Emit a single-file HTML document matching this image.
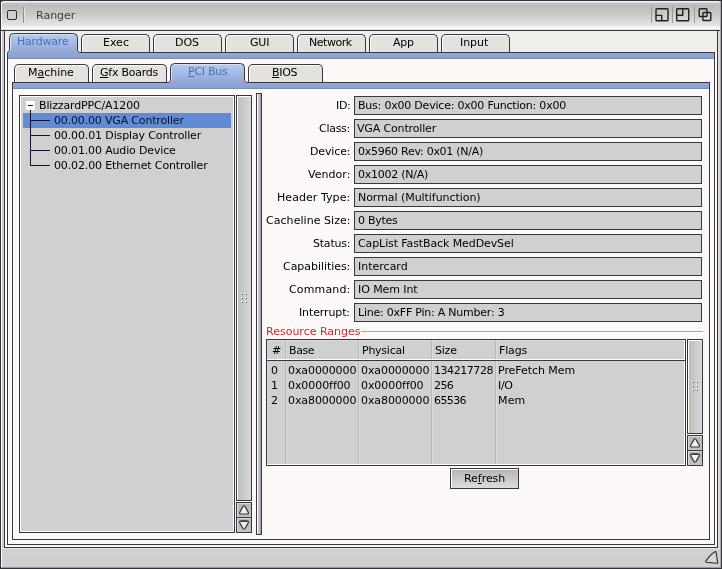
<!DOCTYPE html>
<html>
<head>
<meta charset="utf-8">
<title>Ranger</title>
<style>
html,body{margin:0;padding:0;}
body{width:722px;height:569px;overflow:hidden;background:#cfcfcf;position:relative;
 font-family:"DejaVu Sans","Liberation Sans",sans-serif;font-size:11px;color:#000;line-height:13px;}
body>*{will-change:transform;}
div,span{position:absolute;box-sizing:border-box;white-space:nowrap;}
.t{}
u{text-decoration:underline;text-underline-offset:1px;}
.dk{background:#3a3640;}
#frame{left:0;top:0;width:722px;height:569px;border:1px solid #34323a;background:#34323a;}
#title{left:1px;top:1px;width:720px;height:29px;border-radius:2.5px 2.5px 0 0;
 background:linear-gradient(to bottom,#f2f2f2 0,#f2f2f2 1px,#c6c6c6 2px,#bcbcbc 4px,#c8c8c8 12px,#e4e4e4 24px,#f4f4f4 26px,#ffffff 27px,#ffffff 28px,#c8c8c8 29px);}
#tline{left:0;top:30px;width:722px;height:1px;}
#content{left:5px;top:31px;width:712px;height:516px;background:#fefbfb;}
#ctop{left:5px;top:31px;width:712px;height:21px;background:#efeeea;}
#lb1{left:1px;top:31px;width:1px;height:536px;background:#fff;}
#lb2{left:2px;top:31px;width:2px;height:536px;background:#cbcbcb;}
#lb3{left:4px;top:31px;width:1px;height:517px;}
#rb1{left:717px;top:31px;width:1px;height:517px;}
#rb2{left:718px;top:31px;width:2px;height:536px;background:#dcdcdc;}
#rb3{left:720px;top:1px;width:1px;height:567px;background:#a8a8a8;}
#bb1{left:4px;top:547px;width:714px;height:1px;}
#bbar{left:2px;top:548px;width:718px;height:19px;background:linear-gradient(to bottom,#e6e6e6 0,#e6e6e6 1px,#d2d2d2 1px,#cecece 100%);}
#bb2{left:1px;top:567px;width:720px;height:1px;background:#9a9a9a;}
.page{border:1px solid #3a3640;background:#fdf9f9;}
.page:before{content:"";position:absolute;left:0;top:0;right:0;bottom:0;border-left:1px solid #fff;}
#page1{left:7px;top:52px;width:708px;height:493px;}
#page2{left:12px;top:82px;width:698px;height:458px;}
.band{left:0;top:0;width:100%;height:6px;background:linear-gradient(to bottom,#93a9d6,#8aa0cf);border-bottom:1px solid #768cbc;}
.bandw{left:0;top:6px;width:100%;height:1px;background:#fff;}
.tab{border:1px solid #3a3640;border-bottom:0;border-radius:5px 5px 0 0;background:#e4e2de;box-shadow:inset 1px 1px 0 #fff;}
.lbox{border:1px solid #3a3640;background:#d0d0d0;}
.sbar{border:1px solid #3a3640;background:linear-gradient(to right,#bcbcbc,#d8d8d8);box-shadow:inset 1px 1px 0 #fff;}
.sbtn{border:1px solid #3a3640;background:linear-gradient(to bottom,#b6b6b6,#c4c4c4);box-shadow:inset 1px 1px 0 #dcdcdc;}
.fld{left:354px;width:348px;height:19px;border:1px solid #3a3640;background:#d0d0d0;}
</style>
</head>
<body>
<div id="frame"></div><div id="title"></div><div id="tline" class="dk"></div><div id="content"></div><div id="ctop"></div>
<div id="lb1"></div><div id="lb2"></div><div id="lb3" class="dk"></div>
<div id="rb1" class="dk"></div><div id="rb2"></div><div id="rb3"></div>
<div id="bb1" class="dk"></div><div id="bbar"></div><div id="bb2"></div>
<div style="left:7px;top:10px;width:10px;height:10px;border:1px solid #2c2c2c;border-radius:2px;background:#d0d0d0;"></div>
<div style="left:23px;top:7px;width:1px;height:16px;background:#909090;"></div><div style="left:24px;top:7px;width:1px;height:16px;background:#e4e4e4;"></div>
<div style="left:1px;top:2px;width:1px;height:28px;background:#f4f4f4;"></div>
<div class="t" style="left:36.1px;top:9px;color:#3c3c3c;">Ranger</div>
<svg style="position:absolute;left:650px;top:4px" width="70" height="24" viewBox="0 0 70 24">
 <g fill="none" stroke="#222222" stroke-width="1.4">
  <line x1="1.5" y1="2" x2="1.5" y2="19" stroke="#9a9a9a" stroke-width="1"/>
  <line x1="22.5" y1="2" x2="22.5" y2="19" stroke="#9a9a9a" stroke-width="1"/>
  <line x1="44.5" y1="2" x2="44.5" y2="19" stroke="#9a9a9a" stroke-width="1"/>
  <rect x="6" y="4.7" width="12" height="12" rx="0.8"/>
  <path d="M6 11.4 h5.7 v5.3"/>
  <rect x="26.7" y="4.7" width="12" height="12" rx="0.8"/>
  <path d="M26.7 11.3 h6 v-6.6"/>
  <rect x="49.2" y="4.7" width="7.8" height="7.8" rx="0.8"/>
  <rect x="52.9" y="8.5" width="7.9" height="8" rx="0.8"/>
 </g>
</svg>
<svg style="position:absolute;left:703px;top:549px" width="17" height="17" viewBox="0 0 17 17">
 <path d="M3 11.9 Q6.5 6 11.8 2.7 Q12.9 2 13.1 3.3 L14.7 13.3 Q14.8 14.3 13.8 14.2 L3.4 13.2 Q2.2 12.9 3 11.9 Z" fill="#d6d6d6" stroke="#2c2c2c" stroke-width="1.1" stroke-linejoin="round"/>
</svg>
<div id="page1" class="page"><div class="band"></div><div class="bandw"></div></div>
<svg style="position:absolute;left:6px;top:33px" width="75" height="21" viewBox="0 0 75 21"><defs><linearGradient id="g9_33" x1="0" y1="0" x2="0" y2="1"><stop offset="0" stop-color="#b6cdf0"/><stop offset="1" stop-color="#8ea4d2"/></linearGradient></defs><path d="M 1.5 19.5 L 3.5 17.5 L 3.5 4.5 Q 3.5 0.5 7.5 0.5 L 67.5 0.5 Q 71.5 0.5 71.5 4.5 L 71.5 17.5 L 73.5 19.5 L 73.5 21 L 1.5 21 Z" fill="url(#g9_33)"/><path d="M 4.5 17.5 L 4.5 4.8 Q 4.5 1.5 7.8 1.5 L 67.5 1.5" fill="none" stroke="#d4e2f8" stroke-width="1"/><path d="M 1.5 19.5 L 3.5 17.5 L 3.5 4.5 Q 3.5 0.5 7.5 0.5 L 67.5 0.5 Q 71.5 0.5 71.5 4.5 L 71.5 17.5 L 73.5 19.5" fill="none" stroke="#3a3640" stroke-width="1"/></svg>
<div class="t" style="left:17.0px;top:35px;letter-spacing:-0.20px;color:#4a70b8;">Hardware</div>
<div class="tab" style="left:81px;top:34px;width:69px;height:18px;"></div>
<div class="t" style="left:102.5px;top:36px;">Exec</div>
<div class="tab" style="left:153px;top:34px;width:69px;height:18px;"></div>
<div class="t" style="left:174.6px;top:36px;letter-spacing:-0.05px;">DOS</div>
<div class="tab" style="left:225px;top:34px;width:69px;height:18px;"></div>
<div class="t" style="left:249.9px;top:36px;letter-spacing:-0.15px;">GUI</div>
<div class="tab" style="left:297px;top:34px;width:69px;height:18px;"></div>
<div class="t" style="left:309.1px;top:36px;letter-spacing:-0.46px;">Network</div>
<div class="tab" style="left:369px;top:34px;width:69px;height:18px;"></div>
<div class="t" style="left:392.9px;top:36px;letter-spacing:-0.20px;">App</div>
<div class="tab" style="left:441px;top:34px;width:69px;height:18px;"></div>
<div class="t" style="left:460.4px;top:36px;letter-spacing:-0.06px;">Input</div>
<div id="page2" class="page"><div class="band"></div><div class="bandw"></div></div>
<div class="tab" style="left:14px;top:64px;width:75px;height:18px;"></div>
<div class="t" style="left:27.6px;top:66px;letter-spacing:-0.03px;">M<u>a</u>chine</div>
<div class="tab" style="left:92px;top:64px;width:75px;height:18px;"></div>
<div class="t" style="left:100.2px;top:66px;letter-spacing:-0.25px;"><u>G</u>fx Boards</div>
<svg style="position:absolute;left:167px;top:63px" width="81" height="21" viewBox="0 0 81 21"><defs><linearGradient id="g170_63" x1="0" y1="0" x2="0" y2="1"><stop offset="0" stop-color="#b6cdf0"/><stop offset="1" stop-color="#8ea4d2"/></linearGradient></defs><path d="M 1.5 19.5 L 3.5 17.5 L 3.5 4.5 Q 3.5 0.5 7.5 0.5 L 73.5 0.5 Q 77.5 0.5 77.5 4.5 L 77.5 17.5 L 79.5 19.5 L 79.5 21 L 1.5 21 Z" fill="url(#g170_63)"/><path d="M 4.5 17.5 L 4.5 4.8 Q 4.5 1.5 7.8 1.5 L 73.5 1.5" fill="none" stroke="#d4e2f8" stroke-width="1"/><path d="M 1.5 19.5 L 3.5 17.5 L 3.5 4.5 Q 3.5 0.5 7.5 0.5 L 73.5 0.5 Q 77.5 0.5 77.5 4.5 L 77.5 17.5 L 79.5 19.5" fill="none" stroke="#3a3640" stroke-width="1"/></svg>
<div class="t" style="left:187.6px;top:65px;letter-spacing:-0.26px;color:#4a70b8;"><u>P</u>CI Bus</div>
<div class="tab" style="left:248px;top:64px;width:75px;height:18px;"></div>
<div class="t" style="left:272.1px;top:66px;letter-spacing:-0.32px;"><u>B</u>IOS</div>
<div class="lbox" style="left:19px;top:95px;width:216px;height:438px;box-shadow:inset 0 0 0 1px #fff;"></div>
<div style="left:23px;top:113px;width:208px;height:15px;background:#618bd4;"></div>
<div style="left:26px;top:101px;width:9px;height:9px;background:#fff;"></div>
<div style="left:28px;top:105px;width:5px;height:1px;background:#222;"></div>
<div style="left:30px;top:110px;width:1px;height:56px;background:#101030;"></div>
<div style="left:30px;top:120px;width:20px;height:1px;background:#101030;"></div>
<div style="left:30px;top:135px;width:20px;height:1px;background:#101030;"></div>
<div style="left:30px;top:150px;width:20px;height:1px;background:#101030;"></div>
<div style="left:30px;top:165px;width:20px;height:1px;background:#101030;"></div>
<div class="t" style="left:39.1px;top:99px;letter-spacing:-0.15px;">BlizzardPPC/A1200</div>
<div class="t" style="left:54.4px;top:114px;letter-spacing:-0.17px;color:#0a1030;">00.00.00 VGA Controller</div>
<div class="t" style="left:54.4px;top:129px;letter-spacing:-0.13px;">00.00.01 Display Controller</div>
<div class="t" style="left:54.4px;top:144px;letter-spacing:-0.15px;">00.01.00 Audio Device</div>
<div class="t" style="left:54.4px;top:159px;letter-spacing:-0.14px;">00.02.00 Ethernet Controller</div>
<div class="sbar" style="left:236px;top:95px;width:16px;height:406px;"></div>
<div class="sbtn" style="left:236px;top:502px;width:16px;height:16px;"></div>
<div class="sbtn" style="left:236px;top:517px;width:16px;height:16px;"></div>
<svg style="position:absolute;left:236px;top:502px" width="16" height="31" viewBox="0 0 16 31"><g fill="#f0f0f0" stroke="#383838" stroke-width="1.15" stroke-linejoin="round"><path d="M6.9 4.6 Q8 2.9 9.1 4.6 L12.3 10.4 Q12.9 12 11.3 12 L4.7 12 Q3.1 12 3.7 10.4 Z"/><path d="M6.9 26.4 Q8 28.1 9.1 26.4 L12.3 20.6 Q12.9 19 11.3 19 L4.7 19 Q3.1 19 3.7 20.6 Z"/><path d="M4.6 19.2 L11.4 19.2" stroke-width="1.5"/></g></svg>
<div style="left:256px;top:93px;width:6px;height:442px;border:1px solid #3a3640;background:linear-gradient(to right,#fff 0,#fff 1px,#d0d0d6 1px,#a0a0a8 100%);"></div>
<svg style="position:absolute;left:241px;top:293px" width="6" height="10" viewBox="0 0 6 10" shape-rendering="crispEdges"><rect x="0" y="0" width="1" height="1" fill="#fff"/><rect x="1" y="1" width="1" height="1" fill="#585858"/><rect x="0" y="4" width="1" height="1" fill="#fff"/><rect x="1" y="5" width="1" height="1" fill="#585858"/><rect x="0" y="8" width="1" height="1" fill="#fff"/><rect x="1" y="9" width="1" height="1" fill="#585858"/><rect x="4" y="0" width="1" height="1" fill="#fff"/><rect x="5" y="1" width="1" height="1" fill="#585858"/><rect x="4" y="4" width="1" height="1" fill="#fff"/><rect x="5" y="5" width="1" height="1" fill="#585858"/><rect x="4" y="8" width="1" height="1" fill="#fff"/><rect x="5" y="9" width="1" height="1" fill="#585858"/></svg>
<div class="fld" style="top:96px;"></div>
<div class="t" style="left:335.6px;top:99px;letter-spacing:-0.30px;">ID:</div>
<div class="t" style="left:357.7px;top:99px;letter-spacing:-0.21px;">Bus: 0x00 Device: 0x00 Function: 0x00</div>
<div class="fld" style="top:119px;"></div>
<div class="t" style="left:319.1px;top:122px;letter-spacing:-0.28px;">Class:</div>
<div class="t" style="left:357.4px;top:122px;letter-spacing:-0.15px;">VGA Controller</div>
<div class="fld" style="top:142px;"></div>
<div class="t" style="left:309.8px;top:145px;letter-spacing:-0.13px;">Device:</div>
<div class="t" style="left:357.8px;top:145px;letter-spacing:-0.28px;">0x5960 Rev: 0x01 (N/A)</div>
<div class="fld" style="top:165px;"></div>
<div class="t" style="left:308.1px;top:168px;letter-spacing:0.03px;">Vendor:</div>
<div class="t" style="left:357.8px;top:168px;letter-spacing:-0.24px;">0x1002 (N/A)</div>
<div class="fld" style="top:188px;"></div>
<div class="t" style="left:277.1px;top:191px;letter-spacing:0.06px;">Header Type:</div>
<div class="t" style="left:357.5px;top:191px;letter-spacing:-0.05px;">Normal (Multifunction)</div>
<div class="fld" style="top:211px;"></div>
<div class="t" style="left:265.8px;top:214px;letter-spacing:0.05px;">Cacheline Size:</div>
<div class="t" style="left:357.8px;top:214px;letter-spacing:-0.28px;">0 Bytes</div>
<div class="fld" style="top:234px;"></div>
<div class="t" style="left:312.8px;top:237px;letter-spacing:-0.22px;">Status:</div>
<div class="t" style="left:357.8px;top:237px;letter-spacing:-0.10px;">CapList FastBack MedDevSel</div>
<div class="fld" style="top:257px;"></div>
<div class="t" style="left:283.1px;top:260px;letter-spacing:-0.05px;">Capabilities:</div>
<div class="t" style="left:357.5px;top:260px;">Intercard</div>
<div class="fld" style="top:280px;"></div>
<div class="t" style="left:288.9px;top:283px;letter-spacing:0.15px;">Command:</div>
<div class="t" style="left:357.5px;top:283px;letter-spacing:-0.08px;">IO Mem Int</div>
<div class="fld" style="top:303px;"></div>
<div class="t" style="left:299.3px;top:306px;letter-spacing:-0.12px;">Interrupt:</div>
<div class="t" style="left:357.5px;top:306px;letter-spacing:-0.23px;">Line: 0xFF Pin: A Number: 3</div>
<div class="t" style="left:265.8px;top:325px;color:#d02828;">Resource Ranges</div>
<div style="left:361px;top:331px;width:342px;height:1px;background:#aca4a4;"></div>
<div style="left:361px;top:332px;width:342px;height:1px;background:#fff;"></div>
<div class="lbox" style="left:266px;top:339px;width:420px;height:127px;box-shadow:inset -1px -1px 0 #fff, inset 1px 1px 0 #dadada;"></div>
<div style="left:285px;top:340px;width:1px;height:124px;background:#b8b8b8;"></div><div style="left:286px;top:340px;width:1px;height:124px;background:#dcdcdc;"></div>
<div style="left:358px;top:340px;width:1px;height:124px;background:#b8b8b8;"></div><div style="left:359px;top:340px;width:1px;height:124px;background:#dcdcdc;"></div>
<div style="left:431px;top:340px;width:1px;height:124px;background:#b8b8b8;"></div><div style="left:432px;top:340px;width:1px;height:124px;background:#dcdcdc;"></div>
<div style="left:495px;top:340px;width:1px;height:124px;background:#b8b8b8;"></div><div style="left:496px;top:340px;width:1px;height:124px;background:#dcdcdc;"></div>
<div style="left:267px;top:359px;width:418px;height:1px;background:#fff;"></div>
<div style="left:266px;top:360px;width:420px;height:1px;background:#3a3640;"></div>
<div class="t" style="left:272.4px;top:344px;letter-spacing:-0.60px;">#</div>
<div class="t" style="left:288.8px;top:344px;letter-spacing:-0.42px;">Base</div>
<div class="t" style="left:361.9px;top:344px;letter-spacing:-0.25px;">Physical</div>
<div class="t" style="left:435.3px;top:344px;letter-spacing:-0.22px;">Size</div>
<div class="t" style="left:498.8px;top:344px;letter-spacing:-0.14px;">Flags</div>
<div class="t" style="left:271.2px;top:364px;">0</div>
<div class="t" style="left:288.1px;top:364px;letter-spacing:-0.09px;">0xa0000000</div>
<div class="t" style="left:361.1px;top:364px;letter-spacing:-0.09px;">0xa0000000</div>
<div class="t" style="left:433.8px;top:364px;letter-spacing:-0.44px;">134217728</div>
<div class="t" style="left:497.8px;top:364px;letter-spacing:-0.05px;">PreFetch Mem</div>
<div class="t" style="left:270.8px;top:379px;">1</div>
<div class="t" style="left:288.1px;top:379px;letter-spacing:-0.07px;">0x0000ff00</div>
<div class="t" style="left:361.1px;top:379px;letter-spacing:-0.07px;">0x0000ff00</div>
<div class="t" style="left:434.3px;top:379px;letter-spacing:-0.60px;">256</div>
<div class="t" style="left:497.8px;top:379px;letter-spacing:-0.30px;">I/O</div>
<div class="t" style="left:271.2px;top:394px;">2</div>
<div class="t" style="left:288.1px;top:394px;letter-spacing:-0.09px;">0xa8000000</div>
<div class="t" style="left:361.1px;top:394px;letter-spacing:-0.09px;">0xa8000000</div>
<div class="t" style="left:434.3px;top:394px;letter-spacing:-0.60px;">65536</div>
<div class="t" style="left:497.8px;top:394px;letter-spacing:0.15px;">Mem</div>
<div class="sbar" style="left:687px;top:339px;width:16px;height:95px;"></div>
<div class="sbtn" style="left:687px;top:435px;width:16px;height:16px;"></div>
<div class="sbtn" style="left:687px;top:450px;width:16px;height:16px;"></div>
<svg style="position:absolute;left:687px;top:435px" width="16" height="31" viewBox="0 0 16 31"><g fill="#f0f0f0" stroke="#383838" stroke-width="1.15" stroke-linejoin="round"><path d="M6.9 4.6 Q8 2.9 9.1 4.6 L12.3 10.4 Q12.9 12 11.3 12 L4.7 12 Q3.1 12 3.7 10.4 Z"/><path d="M6.9 26.4 Q8 28.1 9.1 26.4 L12.3 20.6 Q12.9 19 11.3 19 L4.7 19 Q3.1 19 3.7 20.6 Z"/><path d="M4.6 19.2 L11.4 19.2" stroke-width="1.5"/></g></svg>
<svg style="position:absolute;left:692px;top:381px" width="6" height="10" viewBox="0 0 6 10" shape-rendering="crispEdges"><rect x="0" y="0" width="1" height="1" fill="#fff"/><rect x="1" y="1" width="1" height="1" fill="#585858"/><rect x="0" y="4" width="1" height="1" fill="#fff"/><rect x="1" y="5" width="1" height="1" fill="#585858"/><rect x="0" y="8" width="1" height="1" fill="#fff"/><rect x="1" y="9" width="1" height="1" fill="#585858"/><rect x="4" y="0" width="1" height="1" fill="#fff"/><rect x="5" y="1" width="1" height="1" fill="#585858"/><rect x="4" y="4" width="1" height="1" fill="#fff"/><rect x="5" y="5" width="1" height="1" fill="#585858"/><rect x="4" y="8" width="1" height="1" fill="#fff"/><rect x="5" y="9" width="1" height="1" fill="#585858"/></svg>
<div style="left:450px;top:468px;width:69px;height:21px;border:1px solid #3a3640;background:linear-gradient(to bottom,#b4b4b4,#dcdcdc);box-shadow:inset 1px 1px 0 #fff;"></div>
<div class="t" style="left:463.9px;top:472px;letter-spacing:-0.05px;">Re<u>f</u>resh</div>
</body>
</html>
